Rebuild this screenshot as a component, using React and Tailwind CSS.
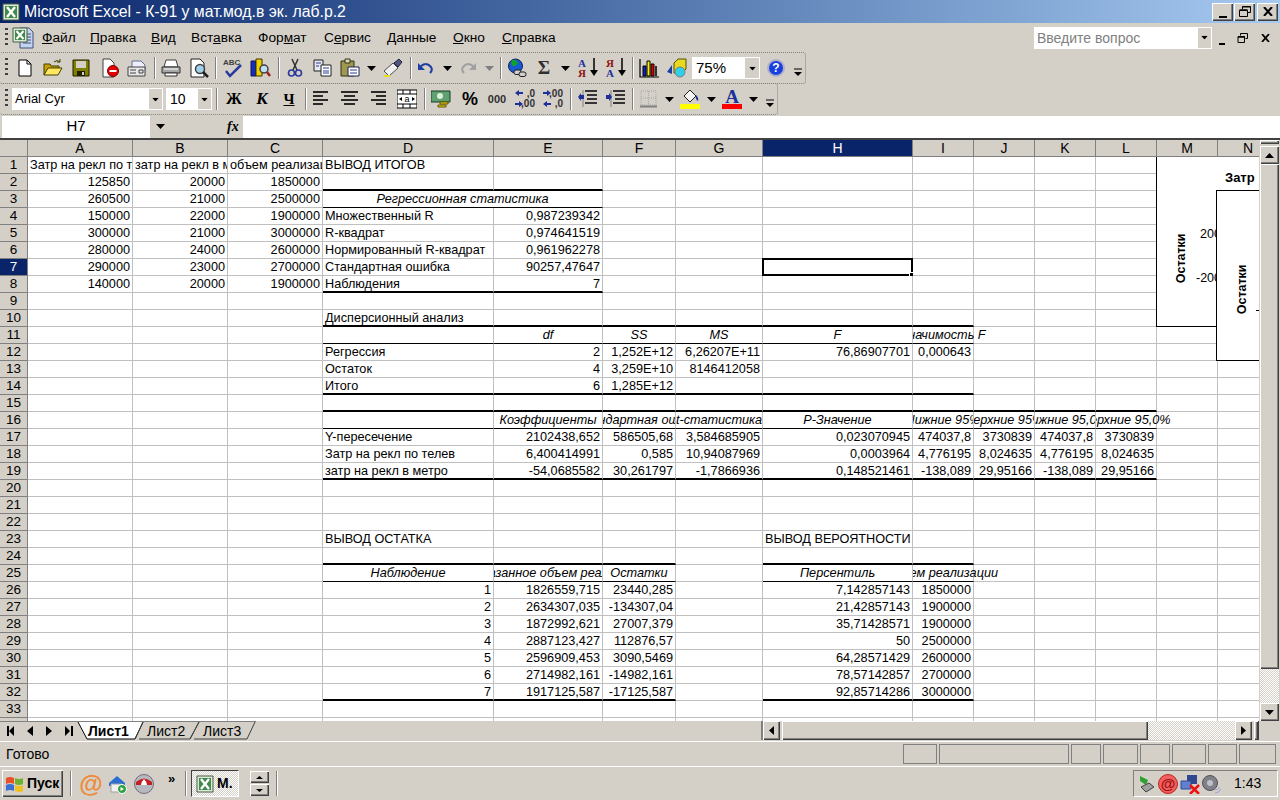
import React from 'react';

const raised = 'bg-[#d4d0c8] shadow-[inset_1px_1px_0_#fff,inset_-1px_-1px_0_#404040,inset_-2px_-2px_0_#808080]';
const dither = 'bg-[repeating-conic-gradient(#fff_0_25%,#d4d0c8_0_50%)] bg-[length:2px_2px]';

const Svg = ({ className = '', w = 20, h = 20, children }) => (
  <svg width={w} height={h} viewBox={`0 0 ${w} ${h}`} className={`shrink-0 ${className}`}>{children}</svg>
);

// --- toolbar bits ---
const Caret = ({ className = '', color = '#000' }) => (
  <Svg w={9} h={5} className={className}><path d="M0 0h9L4.5 5z" fill={color} /></Svg>
);
const Sep = ({ className = '' }) => (
  <div className={`w-[2px] h-[22px] shrink-0 border-l border-l-[#808080] border-r border-r-white ${className}`} />
);
const Grip = () => (
  <div className="ml-[5px] w-[3px] h-[20px] shrink-0 bg-[repeating-linear-gradient(#404040_0_2px,transparent_2px_5px)]" />
);
const Chevron = ({ className = '' }) => (
  <Svg w={10} h={20} className={className}>
    <path d="M1 11h8" stroke="#000" />
    <path d="M1 14h8l-4 4z" fill="#000" />
  </Svg>
);

const NewIcon = ({ className }) => (
  <Svg className={className}><path d="M4 2h8l4 4v12H4z" fill="#fff" stroke="#000" /><path d="M12 2v4h4" fill="none" stroke="#000" /></Svg>
);
const OpenIcon = ({ className }) => (
  <Svg className={className}>
    <path d="M1 6h6l1 2h8v3H5L1 17z" fill="#c8a000" stroke="#404000" />
    <path d="M5 10h14l-4 7H1z" fill="#ffe860" stroke="#404000" />
    <path d="M11 4q3-3 6 0M17 1v3h-3" fill="none" stroke="#404000" />
  </Svg>
);
const SaveIcon = ({ className }) => (
  <Svg className={className}>
    <path d="M2 2h16v16H2z" fill="#808000" stroke="#202000" />
    <path d="M5 3h10v7H5z" fill="#d4d0c8" />
    <path d="M6 13h8v5H6z" fill="#202000" /><path d="M11 14h2v3h-2z" fill="#d4d0c8" />
  </Svg>
);
const PermIcon = ({ className }) => (
  <Svg className={className}>
    <path d="M3 1h7l4 4v14H3z" fill="#fff" stroke="#404040" />
    <circle cx="13" cy="13" r="5.5" fill="#e00000" stroke="#800000" />
    <path d="M9.5 12h7v2h-7z" fill="#fff" />
  </Svg>
);
const MailIcon = ({ className }) => (
  <Svg className={className}>
    <path d="M5 3h9l4 4v6H5z" fill="#eef" stroke="#607090" />
    <path d="M1 9h17v9H1z" fill="#e8e8e8" stroke="#404040" />
    <path d="M3 12h6M3 15h6M12 12h4v3h-4z" stroke="#404040" fill="none" />
  </Svg>
);
const PrintIcon = ({ className }) => (
  <Svg className={className}>
    <path d="M5 2h10l2 7H3z" fill="#fff" stroke="#404040" />
    <path d="M1 9h18v6H1z" fill="#a8a8a8" stroke="#303030" />
    <path d="M4 15h12v3H4z" fill="#fff" stroke="#303030" />
    <path d="M3 11h14" stroke="#fff" />
  </Svg>
);
const PreviewIcon = ({ className }) => (
  <Svg className={className}>
    <path d="M2 1h9l4 4v14H2z" fill="#fff" stroke="#202020" />
    <circle cx="11" cy="11" r="4.5" fill="#a0d0e8" stroke="#404040" strokeWidth="1.5" />
    <path d="M14 14l5 5" stroke="#202020" strokeWidth="2.5" />
  </Svg>
);
const SpellIcon = ({ className }) => (
  <Svg className={className}>
    <text x="0" y="7" fontSize="8" fontWeight="700" fill="#404040" fontFamily="Liberation Sans">ABC</text>
    <path d="M3 13l4 5L18 7" fill="none" stroke="#2a3a9a" strokeWidth="2.5" />
  </Svg>
);
const ResearchIcon = ({ className }) => (
  <Svg w={21} className={className}>
    <path d="M1 3h5v15H1z" fill="#1030c0" stroke="#101050" />
    <path d="M6 1h6v17H6z" fill="#f0d000" stroke="#403000" />
    <circle cx="14" cy="11" r="4" fill="#c0e0f0" stroke="#404040" strokeWidth="1.5" />
    <path d="M17 14l3 4" stroke="#a02020" strokeWidth="2.5" />
  </Svg>
);
const CutIcon = ({ className }) => (
  <Svg className={className}>
    <path d="M7 1l5 11M13 1l-5 11" stroke="#303030" strokeWidth="1.5" />
    <circle cx="6.5" cy="15" r="3" fill="none" stroke="#2a3a9a" strokeWidth="1.6" />
    <circle cx="13.5" cy="15" r="3" fill="none" stroke="#2a3a9a" strokeWidth="1.6" />
  </Svg>
);
const CopyIcon = ({ className }) => (
  <Svg className={className}>
    <path d="M1 2h9v11H1z" fill="#e8e8f0" stroke="#202020" />
    <path d="M8 7h10v11H8z" fill="#fff" stroke="#202020" />
    <path d="M3 5h5M3 8h3M10 10h6M10 13h6M10 15h6" stroke="#2a3a9a" />
  </Svg>
);
const PasteIcon = ({ className }) => (
  <Svg className={className}>
    <path d="M1 3h13v15H1z" fill="#a09850" stroke="#303010" />
    <path d="M5 1h5v4H5z" fill="#d8d8c0" stroke="#303010" />
    <path d="M8 9h11v9H8z" fill="#fff" stroke="#202050" />
    <path d="M10 12h7M10 15h7" stroke="#2a3a9a" />
  </Svg>
);
const PainterIcon = ({ className }) => (
  <Svg className={className}>
    <path d="M1 13L10 5l5 5-9 8z" fill="#f0f0f0" stroke="#505050" />
    <path d="M11 5l5-4 3 3-4 5z" fill="#505880" stroke="#202040" />
    <path d="M1 18h6" stroke="#e8e020" strokeWidth="2" />
  </Svg>
);
const UndoIcon = ({ className }) => (
  <Svg className={className}>
    <path d="M4 9q6-6 11 0 2 3-1 6" fill="none" stroke="#1c3fa0" strokeWidth="2" />
    <path d="M2 5v7h7z" fill="#1c3fa0" />
  </Svg>
);
const RedoIcon = ({ className }) => (
  <Svg className={className}>
    <path d="M16 9q-6-6-11 0-2 3 1 6" fill="none" stroke="#a0a0a0" strokeWidth="2" />
    <path d="M18 5v7h-7z" fill="#a0a0a0" />
  </Svg>
);
const GlobeIcon = ({ className }) => (
  <Svg className={className}>
    <circle cx="8.5" cy="8" r="7" fill="#1858d0" stroke="#102060" />
    <path d="M5 2q4-1 6 3-2 4-5 3-3-2-1-6z" fill="#10a030" />
    <rect x="7" y="12" width="7" height="4.5" rx="2" fill="#d0d0d0" stroke="#202020" />
    <rect x="12" y="14" width="7" height="4.5" rx="2" fill="#d0d0d0" stroke="#202020" />
  </Svg>
);
const SortIcon = ({ top, bottom, topColor, bottomColor, className }) => (
  <div className={`relative w-[20px] h-[20px] shrink-0 font-['Liberation_Serif',serif] font-bold text-[11px] leading-[10px] ${className}`}>
    <div className={topColor}>{top}</div>
    <div className={bottomColor}>{bottom}</div>
    <Svg w={8} h={20} className="absolute right-0 top-0">
      <path d="M4 0v14" stroke="#000" strokeWidth="1.5" /><path d="M0 12h8l-4 6z" fill="#000" />
    </Svg>
  </div>
);
const ChartIcon = ({ className }) => (
  <Svg className={className}>
    <path d="M1 1v18h19" fill="none" stroke="#000" strokeWidth="1.2" />
    <path d="M4 8h3v10H4z" fill="#1020d0" stroke="#000" />
    <path d="M8 3h3v15H8z" fill="#f0f000" stroke="#000" />
    <path d="M12 6h3v12h-3z" fill="#e00000" stroke="#000" />
    <path d="M16 8h2v10h-2z" fill="#303030" />
  </Svg>
);
const DrawIcon = ({ className }) => (
  <Svg className={className}>
    <path d="M7 5l4-4h8v10l-4 4H7z" fill="#e8d820" stroke="#505000" />
    <path d="M0 14l5-7v9z" fill="#1c3fa0" />
    <circle cx="13" cy="14" r="5" fill="#30d0e8" stroke="#708090" />
  </Svg>
);
const HelpIcon = ({ className }) => (
  <div className={`w-[18px] h-[18px] shrink-0 rounded-full bg-[#1840e0] border-2 border-[#b0b0c8] text-white font-bold text-[12px] leading-[14px] text-center ${className}`}>?</div>
);

const Glyph = ({ className = '', children }) => (
  <div className={`w-[20px] h-[20px] shrink-0 flex items-center justify-center ${className}`}>{children}</div>
);
const AlignIcon = ({ kind, className }) => {
  const lines = kind === 'left'
    ? ['M1 3h15', 'M1 7h10', 'M1 11h15', 'M1 15h10']
    : kind === 'center'
      ? ['M1 3h17', 'M4 7h11', 'M1 11h17', 'M4 15h11']
      : ['M3 3h15', 'M8 7h10', 'M3 11h15', 'M8 15h10'];
  return <Svg className={className}>{lines.map((d) => <path key={d} d={d} stroke="#000" strokeWidth="1.6" />)}</Svg>;
};
const MergeIcon = ({ className }) => (
  <Svg className={className}>
    <path d="M0 1h20v18H0z" fill="#fff" stroke="#000" />
    <path d="M0 5h20M0 15h20M6 1v4M13 1v4M6 15v4M13 15v4" stroke="#000" />
    <path d="M2 10l3-2v4zM18 10l-3-2v4z" fill="#000" />
    <text x="10" y="13" fontSize="9" textAnchor="middle" fontFamily="Liberation Sans">a</text>
  </Svg>
);
const MoneyIcon = ({ className }) => (
  <Svg className={className}>
    <path d="M0 2h19v11H0z" fill="#60a070" stroke="#104020" />
    <circle cx="9" cy="7" r="3" fill="#d8f0d8" />
    <path d="M9 13h8v2H9zM7 16h8v2H7z" fill="#e8d820" stroke="#605000" />
  </Svg>
);
const DecIcon = ({ left, top, bottom, className }) => (
  <div className={`relative w-[20px] h-[20px] shrink-0 font-bold text-[10px] leading-[10px] text-[#303030] ${className}`}>
    <div className="absolute right-0 top-0">{top}</div>
    <div className="absolute right-0 bottom-0">{bottom}</div>
    <Svg w={8} h={20} className="absolute left-0 top-0">
      <path d={left ? 'M0 4l4-3v2h4v2H4v2zM8 15l-4-3v2H0v2h4v2z' : 'M8 4L4 1v2H0v2h4v2zM0 15l4-3v2h4v2H4v2z'} fill="#1c2f9a" />
    </Svg>
  </div>
);
const IndentIcon = ({ flip, className }) => (
  <Svg className={className}>
    <path d="M7 2h12M9 6h10M9 10h10M7 14h12" stroke="#000" strokeWidth="1.6" />
    <path d="M5 1v17" stroke="#808080" />
    <path d={flip ? 'M0 6h3V4l3 4-3 4v-2H0z' : 'M6 6H3V4L0 8l3 4v-2h3z'} fill="#1c2f9a" />
  </Svg>
);
const BorderIcon = ({ className }) => (
  <Svg className={className}>
    <path d="M2 2h15v14H2z" fill="none" stroke="#a8a8a8" strokeDasharray="1 1" />
    <path d="M9.500 2v14M2 9h15" stroke="#a8a8a8" strokeDasharray="1 1" />
    <path d="M1 17.500h17" stroke="#808080" strokeWidth="2" />
  </Svg>
);
const FillIcon = ({ className }) => (
  <Svg className={className}>
    <path d="M4 7l6-6 6 6-6 6z" fill="#f4f4f4" stroke="#202020" />
    <path d="M16 6q3 3 2 6-3-2-2-6z" fill="#1c2f9a" />
    <path d="M0 15h20v5H0z" fill="#ffff00" />
  </Svg>
);
const FontColorIcon = ({ className }) => (
  <div className={`relative w-[20px] h-[20px] shrink-0 ${className}`}>
    <div className="text-center font-['Liberation_Serif',serif] font-bold text-[19px] leading-[16px] text-[#1c2f9a]">A</div>
    <div className="absolute left-0 bottom-0 w-[20px] h-[5px] bg-[#ff0000]" />
  </div>
);
const ExcelIcon = ({ size = 18, className }) => (
  <svg width={size} height={size} viewBox="0 0 18 18" className={`shrink-0 ${className}`}>
    <path d="M1 1h16v16H1z" fill="#dfe8d8" stroke="#406040" />
    <path d="M3 3h12v12H3z" fill="#3f8a4c" />
    <path d="M5 4l8 10M13 4L5 14" stroke="#fff" strokeWidth="2.4" />
  </svg>
);
const DocIcon = () => (
  <Svg w={22} h={24} className="ml-[4px]">
    <path d="M8 2h9l4 4v16H8z" fill="#c4d4ec" stroke="#405080" />
    <path d="M11 8h8M11 11h8M11 14h8M11 17h8" stroke="#405080" />
    <path d="M1 2h14v14H1z" fill="#dfe8d8" stroke="#406040" />
    <path d="M3 4h10v10H3z" fill="#3f8a4c" />
    <path d="M4.500 5l7 8M11.500 5l-7 8" stroke="#fff" strokeWidth="2" />
  </Svg>
);

const Combo = ({ className = '', btn = 'w-[13px]', text, textClass = 'text-[14px]' }) => (
  <div className={`h-[22px] shrink-0 flex bg-white border border-white ${className}`}>
    <div className={`flex-1 pl-[2px] leading-[20px] whitespace-nowrap overflow-hidden ${textClass}`}>{text}</div>
    <div className={`${btn} bg-[#d4d0c8] flex items-center justify-center`}><Caret className="scale-75" /></div>
  </div>
);

// --- sheet data ---
const colWidths = 'grid-cols-[28px_105px_95px_95px_171px_109px_73px_87px_150px_61px_61px_61px_61px_61px_61px]';
const cols = ['A', 'B', 'C', 'D', 'E', 'F', 'G', 'H', 'I', 'J', 'K', 'L', 'M', 'N'];

const data = {
  1: { A: 'Затр на рекл по телев', B: 'затр на рекл в метро', C: 'объем реализации', D: 'ВЫВОД ИТОГОВ' },
  2: { A: '125850', B: '20000', C: '1850000' },
  3: { A: '260500', B: '21000', C: '2500000', D: 'Регрессионная статистика' },
  4: { A: '150000', B: '22000', C: '1900000', D: 'Множественный R', E: '0,987239342' },
  5: { A: '300000', B: '21000', C: '3000000', D: 'R-квадрат', E: '0,974641519' },
  6: { A: '280000', B: '24000', C: '2600000', D: 'Нормированный R-квадрат', E: '0,961962278' },
  7: { A: '290000', B: '23000', C: '2700000', D: 'Стандартная ошибка', E: '90257,47647' },
  8: { A: '140000', B: '20000', C: '1900000', D: 'Наблюдения', E: '7' },
  10: { D: 'Дисперсионный анализ' },
  11: { E: 'df', F: 'SS', G: 'MS', H: 'F', I: 'Значимость F' },
  12: { D: 'Регрессия', E: '2', F: '1,252E+12', G: '6,26207E+11', H: '76,86907701', I: '0,000643' },
  13: { D: 'Остаток', E: '4', F: '3,259E+10', G: '8146412058' },
  14: { D: 'Итого', E: '6', F: '1,285E+12' },
  16: { E: 'Коэффициенты', F: 'Стандартная ошибка', G: 't-статистика', H: 'P-Значение', I: 'Нижние 95%', J: 'Верхние 95%', K: 'Нижние 95,0%', L: 'Верхние 95,0%' },
  17: { D: 'Y-пересечение', E: '2102438,652', F: '586505,68', G: '3,584685905', H: '0,023070945', I: '474037,8', J: '3730839', K: '474037,8', L: '3730839' },
  18: { D: 'Затр на рекл по телев', E: '6,400414991', F: '0,585', G: '10,94087969', H: '0,0003964', I: '4,776195', J: '8,024635', K: '4,776195', L: '8,024635' },
  19: { D: 'затр на рекл в метро', E: '-54,0685582', F: '30,261797', G: '-1,7866936', H: '0,148521461', I: '-138,089', J: '29,95166', K: '-138,089', L: '29,95166' },
  23: { D: 'ВЫВОД ОСТАТКА', H: 'ВЫВОД ВЕРОЯТНОСТИ' },
  25: { D: 'Наблюдение', E: 'Предсказанное объем реализации', F: 'Остатки', H: 'Персентиль', I: 'объем реализации' },
  26: { D: '1', E: '1826559,715', F: '23440,285', H: '7,142857143', I: '1850000' },
  27: { D: '2', E: '2634307,035', F: '-134307,04', H: '21,42857143', I: '1900000' },
  28: { D: '3', E: '1872992,621', F: '27007,379', H: '35,71428571', I: '1900000' },
  29: { D: '4', E: '2887123,427', F: '112876,57', H: '50', I: '2500000' },
  30: { D: '5', E: '2596909,453', F: '3090,5469', H: '64,28571429', I: '2600000' },
  31: { D: '6', E: '2714982,161', F: '-14982,161', H: '78,57142857', I: '2700000' },
  32: { D: '7', E: '1917125,587', F: '-17125,587', H: '92,85714286', I: '3000000' },
};

const headerRows = [11, 16, 25];
const spillRight = ['I11', 'L16', 'I25'];
const thick = {
  2: 'DE', 8: 'DE', 10: 'DEFGHI', 14: 'DEFGHI', 15: 'DEFGHIJKL', 19: 'DEFGHIJKL', 24: 'DEFHI', 32: 'DEFHI',
};
const thin = { 3: 'DE', 11: 'DEFGHI', 16: 'DEFGHIJKL', 25: 'DEFHI' };

function Cell({ row, col }) {
  const id = col + row;
  if (id === 'E3') return null; // D3 is merged across D:E
  const value = data[row]?.[col];
  const isNum = value && /^-?[\d,E+]+$/.test(value);
  const isHead = headerRows.includes(row) || id === 'D3';
  let border = 'border-b border-b-[#c0c0c0]';
  if (thick[row]?.includes(col)) border = 'border-b-2 border-b-black';
  else if (thin[row]?.includes(col)) border = 'border-b border-b-black';

  let align = 'justify-start pl-[2px]';
  if (isHead) align = 'justify-center italic';
  else if (isNum) align = 'justify-end pr-[2px]';

  let clip = 'overflow-hidden';
  if (spillRight.includes(id)) clip = '[clip-path:inset(0_-120px_0_0)]';
  else if (id === 'H23' || id === 'H7') clip = '';

  return (
    <div className={`relative flex items-center whitespace-nowrap border-r border-r-[#c0c0c0] ${border} ${align} ${clip} ${id === 'D3' ? 'col-span-2' : ''}`}>
      {value && <span className="shrink-0">{value}</span>}
      {id === 'H7' && (
        <div className="absolute -left-px -top-px w-[151px] h-[18px] border-2 border-black">
          <div className="absolute -right-[3px] -bottom-[3px] w-[5px] h-[5px] bg-black border border-white" />
        </div>
      )}
    </div>
  );
}

function Sheet() {
  const rows = Array.from({ length: 34 }, (_, i) => i + 1);
  return (
    <div className="relative w-[1259px] h-[581px] overflow-hidden bg-white">
      <div className={`grid ${colWidths} auto-rows-[17px] text-[12.7px] leading-[16px] text-black`}>
        <div className="bg-[#d4d0c8] border-r border-b border-[#808080]" />
        {cols.map((c) => (
          <div key={c} className={`flex items-center justify-center border-r border-b border-[#808080] text-[14px] ${c === 'H' ? 'bg-[#0a246a] text-white' : 'bg-[#d4d0c8]'}`}>{c}</div>
        ))}
        {rows.map((r) => (
          <React.Fragment key={r}>
            <div className={`flex items-center justify-center border-r border-b border-[#808080] text-[13.5px] ${r === 7 ? 'bg-[#0a246a] text-white' : 'bg-[#d4d0c8]'}`}>{r < 34 ? r : ''}</div>
            {cols.map((c) => <Cell key={c} row={r} col={c} />)}
          </React.Fragment>
        ))}
      </div>
      {/* the two charts float over the cells */}
      <div className="absolute left-[1156px] top-[17px] w-[200px] h-[170px] bg-white border-l border-b border-black">
        <div className="absolute left-[68px] top-[13px] font-bold text-[13px] leading-[16px] whitespace-nowrap">Затр</div>
        <div className="absolute left-[16px] top-[93px] w-[16px] h-[16px] flex items-center justify-center">
          <span className="-rotate-90 font-bold text-[12.5px] whitespace-nowrap">Остатки</span>
        </div>
        <div className="absolute left-[43px] top-[69px] text-[12.5px] leading-[16px]">200</div>
        <div className="absolute left-[39px] top-[113px] text-[12.5px] leading-[16px]">-200</div>
      </div>
      <div className="absolute left-[1216px] top-[50px] w-[100px] h-[171px] bg-white border-l border-t border-b border-black">
        <div className="absolute left-[17px] top-[90px] w-[16px] h-[16px] flex items-center justify-center">
          <span className="-rotate-90 font-bold text-[12.5px] whitespace-nowrap">Остатки</span>
        </div>
        <div className="absolute left-[39px] top-[119px] w-[4px] h-px bg-black" />
      </div>
    </div>
  );
}

const ScrollArrow = ({ d, className = '' }) => (
  <div className={`${raised} flex items-center justify-center shrink-0 ${className}`}>
    <Svg w={9} h={9}><path d={d} fill="#000" /></Svg>
  </div>
);

const menu = [
  ['', 'Ф', 'айл', 'w-[48px]'],
  ['', 'П', 'равка', 'w-[61px]'],
  ['', 'В', 'ид', 'w-[40px]'],
  ['Вст', 'а', 'вка', 'w-[67px]'],
  ['Фор', 'м', 'ат', 'w-[66px]'],
  ['С', 'е', 'рвис', 'w-[63px]'],
  ['', 'Д', 'анные', 'w-[66px]'],
  ['', 'О', 'кно', 'w-[49px]'],
  ['', 'С', 'правка', 'w-[60px]'],
];

export default function App() {
  return (
    <div className="w-[1280px] h-[800px] overflow-hidden flex flex-col bg-[#d4d0c8] text-black font-['Liberation_Sans',Arial,sans-serif]">
      {/* title bar */}
      <div className="h-[23px] shrink-0 flex items-center bg-gradient-to-r from-[#0a246a] to-[#a6caf0]">
        <ExcelIcon className="ml-[2px]" />
        <span className="ml-[4px] text-white text-[15.8px] leading-[20px] whitespace-nowrap">Microsoft Excel - К-91 у мат.мод.в эк. лаб.р.2</span>
        <div className="ml-auto mr-[2px] flex">
          <div className={`${raised} w-[21px] h-[18px] flex items-end justify-center pb-[3px]`}><div className="w-[8px] h-[2px] bg-black" /></div>
          <div className={`${raised} ml-[1px] w-[21px] h-[18px] flex items-center justify-center`}>
            <Svg w={12} h={11}><path d="M3.500 3V.5h8v6H9" fill="none" stroke="#000" /><path d="M3.500 1h8" stroke="#000" /><path d="M.5 4.500h8v6h-8z" fill="none" stroke="#000" /><path d="M.5 4h8" stroke="#000" strokeWidth="1.5" /></Svg>
          </div>
          <div className={`${raised} ml-[2px] w-[21px] h-[18px] flex items-center justify-center`}>
            <Svg w={10} h={9}><path d="M1 0l8 9M9 0L1 9" stroke="#000" strokeWidth="2" /></Svg>
          </div>
        </div>
      </div>

      {/* menu bar */}
      <div className="h-[29px] shrink-0 flex items-center">
        <Grip />
        <DocIcon />
        <div className="ml-[8px] flex text-[13.7px] leading-[18px] mt-[1px]">
          {menu.map(([a, u, b, w]) => (
            <div key={a + u + b} className={`${w} whitespace-nowrap`}>{a}<span className="underline">{u}</span>{b}</div>
          ))}
        </div>
        <Combo className="ml-[472px] w-[178px]" text="Введите вопрос" textClass="text-[14px] text-[#808080]" />
        <Svg w={8} h={8} className="ml-[6px] mt-[7px]"><path d="M1 6h6v2H1z" fill="#000" /></Svg>
        <Svg w={12} h={10} className="ml-[11px]"><path d="M3.500 2.500v-2h7v5h-2" fill="none" stroke="#000" /><path d="M1 3.500h6.500v6H1z" fill="none" stroke="#000" /><path d="M1 4h7" stroke="#000" strokeWidth="1.5" /></Svg>
        <Svg w={9} h={8} className="ml-[12px]"><path d="M1 0l7 8M8 0L1 8" stroke="#000" strokeWidth="1.8" /></Svg>
      </div>

      {/* standard toolbar */}
      <div className="h-[32px] w-[806px] shrink-0 flex items-center border border-dotted border-[#808080] rounded-[3px] border-l-0">
        <Grip />
        <NewIcon className="ml-[7px]" />
        <OpenIcon className="ml-[8px]" />
        <SaveIcon className="ml-[8px]" />
        <PermIcon className="ml-[9px]" />
        <MailIcon className="ml-[7px]" />
        <Sep className="ml-[7px]" />
        <PrintIcon className="ml-[5px]" />
        <PreviewIcon className="ml-[8px]" />
        <Sep className="ml-[6px]" />
        <SpellIcon className="ml-[6px]" />
        <ResearchIcon className="ml-[7px]" />
        <Sep className="ml-[7px]" />
        <CutIcon className="ml-[5px]" />
        <CopyIcon className="ml-[8px]" />
        <PasteIcon className="ml-[7px]" />
        <Caret className="ml-[7px]" />
        <PainterIcon className="ml-[7px]" />
        <Sep className="ml-[7px]" />
        <UndoIcon className="ml-[4px]" />
        <Caret className="ml-[7px]" />
        <RedoIcon className="ml-[6px]" />
        <Caret className="ml-[7px]" color="#808080" />
        <Sep className="ml-[6px]" />
        <GlobeIcon className="ml-[5px]" />
        <Glyph className="ml-[7px] font-['Liberation_Serif',serif] font-bold text-[19px] text-[#303030]">Σ</Glyph>
        <Caret className="ml-[7px]" />
        <SortIcon className="ml-[8px]" top="A" bottom="Я" topColor="text-[#1c2f9a]" bottomColor="text-[#901010]" />
        <SortIcon className="ml-[8px]" top="Я" bottom="A" topColor="text-[#901010]" bottomColor="text-[#1c2f9a]" />
        <Sep className="ml-[6px]" />
        <ChartIcon className="ml-[5px]" />
        <DrawIcon className="ml-[8px]" />
        <Combo className="ml-[5px] w-[68px]" btn="w-[14px]" text="75%" textClass="text-[15px] pl-[3px]" />
        <HelpIcon className="ml-[7px]" />
        <Chevron className="ml-[8px]" />
      </div>

      {/* formatting toolbar */}
      <div className="h-[32px] w-[778px] shrink-0 -mt-px flex items-center border border-dotted border-[#808080] rounded-[3px] border-l-0">
        <Grip />
        <Combo className="ml-[4px] w-[151px]" text="Arial Cyr" textClass="text-[13px]" />
        <Combo className="ml-[3px] w-[46px]" text="10" textClass="text-[14px] pl-[3px]" />
        <Sep className="ml-[4px]" />
        <Glyph className="ml-[6px] font-['Liberation_Serif',serif] font-bold text-[16px]">Ж</Glyph>
        <Glyph className="ml-[8px] font-['Liberation_Serif',serif] font-bold italic text-[17px]">К</Glyph>
        <Glyph className="ml-[7px] font-['Liberation_Serif',serif] font-bold text-[15px] underline">Ч</Glyph>
        <Sep className="ml-[6px]" />
        <AlignIcon kind="left" className="ml-[5px]" />
        <AlignIcon kind="center" className="ml-[8px]" />
        <AlignIcon kind="right" className="ml-[8px]" />
        <MergeIcon className="ml-[9px]" />
        <Sep className="ml-[7px]" />
        <MoneyIcon className="ml-[5px]" />
        <Glyph className="ml-[9px] font-bold text-[18px]">%</Glyph>
        <Glyph className="ml-[7px] font-bold text-[11px] text-[#303030]">000</Glyph>
        <DecIcon className="ml-[8px]" left top=",0" bottom=",00" />
        <DecIcon className="ml-[8px]" top=",00" bottom=",0" />
        <Sep className="ml-[7px]" />
        <IndentIcon className="ml-[6px]" />
        <IndentIcon className="ml-[8px]" flip />
        <Sep className="ml-[6px]" />
        <BorderIcon className="ml-[5px]" />
        <Caret className="ml-[6px]" />
        <FillIcon className="ml-[6px]" />
        <Caret className="ml-[7px]" />
        <FontColorIcon className="ml-[6px]" />
        <Caret className="ml-[7px]" />
        <Chevron className="ml-[7px]" />
      </div>

      {/* formula bar */}
      <div className="h-[23px] shrink-0 flex items-center">
        <div className="ml-[2px] w-[148px] h-[22px] bg-white text-center text-[15px] leading-[20px]">H7</div>
        <Caret className="ml-[6px]" />
        <div className="ml-[62px] w-[14px] text-[14px] italic font-bold font-['Liberation_Serif',serif] leading-none">fx</div>
        <div className="ml-auto w-[1037px] h-[22px] bg-white" />
      </div>

      {/* sheet + vertical scrollbar */}
      <div className="h-[583px] shrink-0 flex border-t-2 border-t-[#404040]">
        <Sheet />
        <div className="w-[19px] ml-[1px] flex flex-col">
          <div className={`${raised} h-[4px] shrink-0`} />
          <ScrollArrow className="h-[18px] mt-[2px]" d="M0 7h9L4.500 2z" />
          <div className={`${raised} h-[505px] shrink-0`} />
          <div className={`flex-1 ${dither}`} />
          <ScrollArrow className="h-[18px]" d="M0 2h9L4.500 7z" />
        </div>
      </div>

      {/* sheet tabs + horizontal scrollbar */}
      <div className="h-[20px] shrink-0 flex">
        <div className="relative w-[256px] h-[19px] shrink-0 border-t border-t-[#808080]">
          <Svg w={256} h={18} className="absolute left-0 top-0">
            <path d="M78 0l9 17h48l8-17z" fill="#fff" />
            <path d="M78 0l9 17h48l8-17" fill="none" stroke="#000" />
            <path d="M139 17h51l9-17M194 17h53l8-17M143 0l-8 17M199 0l-9 17" fill="none" stroke="#404040" />
            <path d="M7 4h2v10H7zM14 4v10L9 9zM33 4v10l-6-5zM46 4l6 5-6 5zM65 4l5 5-5 5zM71 4h2v10h-2z" fill="#000" />
          </Svg>
          <span className="absolute left-[88px] top-[1px] text-[14px] leading-[17px] font-bold">Лист1</span>
          <span className="absolute left-[147px] top-[1px] text-[14px] leading-[17px]">Лист2</span>
          <span className="absolute left-[203px] top-[1px] text-[14px] leading-[17px]">Лист3</span>
        </div>
        <div className="ml-[505px] w-[2px] h-[19px] bg-[#808080]" />
        <ScrollArrow className="w-[17px] h-[19px]" d="M7 0v9L2 4.500z" />
        <div className={`${raised} ml-[2px] w-[366px] h-[19px]`} />
        <div className={`w-[87px] h-[19px] ${dither}`} />
        <ScrollArrow className="w-[17px] h-[19px]" d="M2 0v9l5-4.500z" />
        <div className={`${raised} ml-[2px] w-[5px] h-[19px] border-r border-r-[#404040]`} />
      </div>

      {/* status bar */}
      <div className="h-[26px] shrink-0 flex items-center border-t border-t-white border-b border-b-white">
        <span className="ml-[6px] text-[14px]">Готово</span>
        <div className="ml-auto mr-[4px] flex gap-[2px]">
          <div className="w-[34px] h-[20px] border border-[#808080]" />
          <div className="w-[130px] h-[20px] border border-[#808080]" />
          <div className="w-[30px] h-[20px] border border-[#808080]" />
          <div className="w-[35px] h-[20px] border border-[#808080]" />
          <div className="w-[30px] h-[20px] border border-[#808080]" />
          <div className="w-[34px] h-[20px] border border-[#808080]" />
          <div className="w-[29px] h-[20px] border border-[#808080]" />
          <div className="w-[37px] h-[20px] border border-[#808080]" />
        </div>
      </div>

      {/* taskbar */}
      <div className="flex-1 flex items-center">
        <div className={`${raised} ml-[2px] w-[61px] h-[27px] flex items-center`}>
          <Svg w={20} h={18} className="ml-[3px]">
            <path d="M1 3q4-2 8 0v6q-4-2-8 0z" fill="#e8502a" />
            <path d="M10 3q4 2 8 0v6q-4 2-8 0z" fill="#70b030" />
            <path d="M1 10q4-2 8 0v6q-4-2-8 0z" fill="#3870d8" />
            <path d="M10 10q4 2 8 0v6q-4 2-8 0z" fill="#f0c020" />
          </Svg>
          <span className="ml-[2px] text-[14px] font-bold">Пуск</span>
        </div>
        <Sep className="ml-[7px] h-[25px]" />
        <span className="ml-[7px] w-[24px] text-center text-[24px] leading-[24px] font-bold text-[#ee8a3a]">@</span>
        <Svg w={20} h={20} className="ml-[4px]">
          <path d="M2 9l8-7 8 7v3H2z" fill="#2a6ed0" />
          <path d="M4 10h11v8H4z" fill="#f0f0f0" stroke="#a0a0a0" />
          <circle cx="15" cy="15" r="4.500" fill="#30a040" stroke="#fff" />
          <path d="M13.500 13l3.500 2-3.500 2z" fill="#fff" />
        </Svg>
        <Svg w={20} h={20} className="ml-[7px]">
          <circle cx="10" cy="10" r="9.500" fill="#b8b8c0" stroke="#707078" />
          <path d="M2 8q8-7 16 0v3H2z" fill="#c02020" />
          <path d="M7 11q0-3 3-6 3 3 3 6z" fill="#fff" />
        </Svg>
        <span className="ml-[14px] w-[7px] -mt-[10px] text-[13px] font-bold leading-none">»</span>
        <Sep className="ml-[10px] h-[25px]" />
        <div className="ml-[4px] w-[48px] h-[27px] flex items-center bg-[repeating-conic-gradient(#fff_0_25%,#d4d0c8_0_50%)] bg-[length:2px_2px] border border-t-[#404040] border-l-[#404040] border-r-white border-b-white">
          <ExcelIcon className="ml-[4px]" />
          <span className="ml-[3px] text-[14px] font-bold">М.</span>
        </div>
        <div className="ml-[11px] w-[19px] flex flex-col gap-px">
          <ScrollArrow className="h-[12px]" d="M1 6h7L4.500 3z" />
          <ScrollArrow className="h-[12px]" d="M1 3h7L4.500 6z" />
        </div>
        <Sep className="ml-[7px] h-[25px]" />
        <div className="ml-auto mr-[2px] w-[145px] h-[27px] flex items-center border border-t-[#808080] border-l-[#808080] border-r-white border-b-white">
          <Svg w={18} h={20} className="ml-[3px]">
            <path d="M3 2l8 4-2 5-6-4z" fill="#30a030" />
            <path d="M4 13l8-4 5 4-8 5z" fill="#a0a0a0" stroke="#404040" />
          </Svg>
          <div className="ml-[3px] w-[20px] h-[20px] rounded-full bg-[#f06060] border border-[#c02020] text-center text-[15px] font-bold leading-[17px] text-[#a01010]">@</div>
          <Svg w={20} h={20} className="ml-[2px]">
            <path d="M7 1h10v9H7z" fill="#304890" />
            <path d="M1 7h10v8H1z" fill="#6080d0" stroke="#304890" />
            <path d="M10 11l9 9M19 11l-9 9" stroke="#f01010" strokeWidth="2.500" />
          </Svg>
          <Svg w={20} h={20} className="ml-[1px]">
            <circle cx="9" cy="9" r="7.500" fill="#808088" stroke="#505058" />
            <circle cx="9" cy="9" r="3" fill="#c0c0c8" />
            <path d="M14 16q3 0 5-3M14 19q4 0 6-4" fill="none" stroke="#a0a0e0" />
          </Svg>
          <span className="ml-[13px] text-[14px] whitespace-nowrap">1:43</span>
        </div>
      </div>
    </div>
  );
}
